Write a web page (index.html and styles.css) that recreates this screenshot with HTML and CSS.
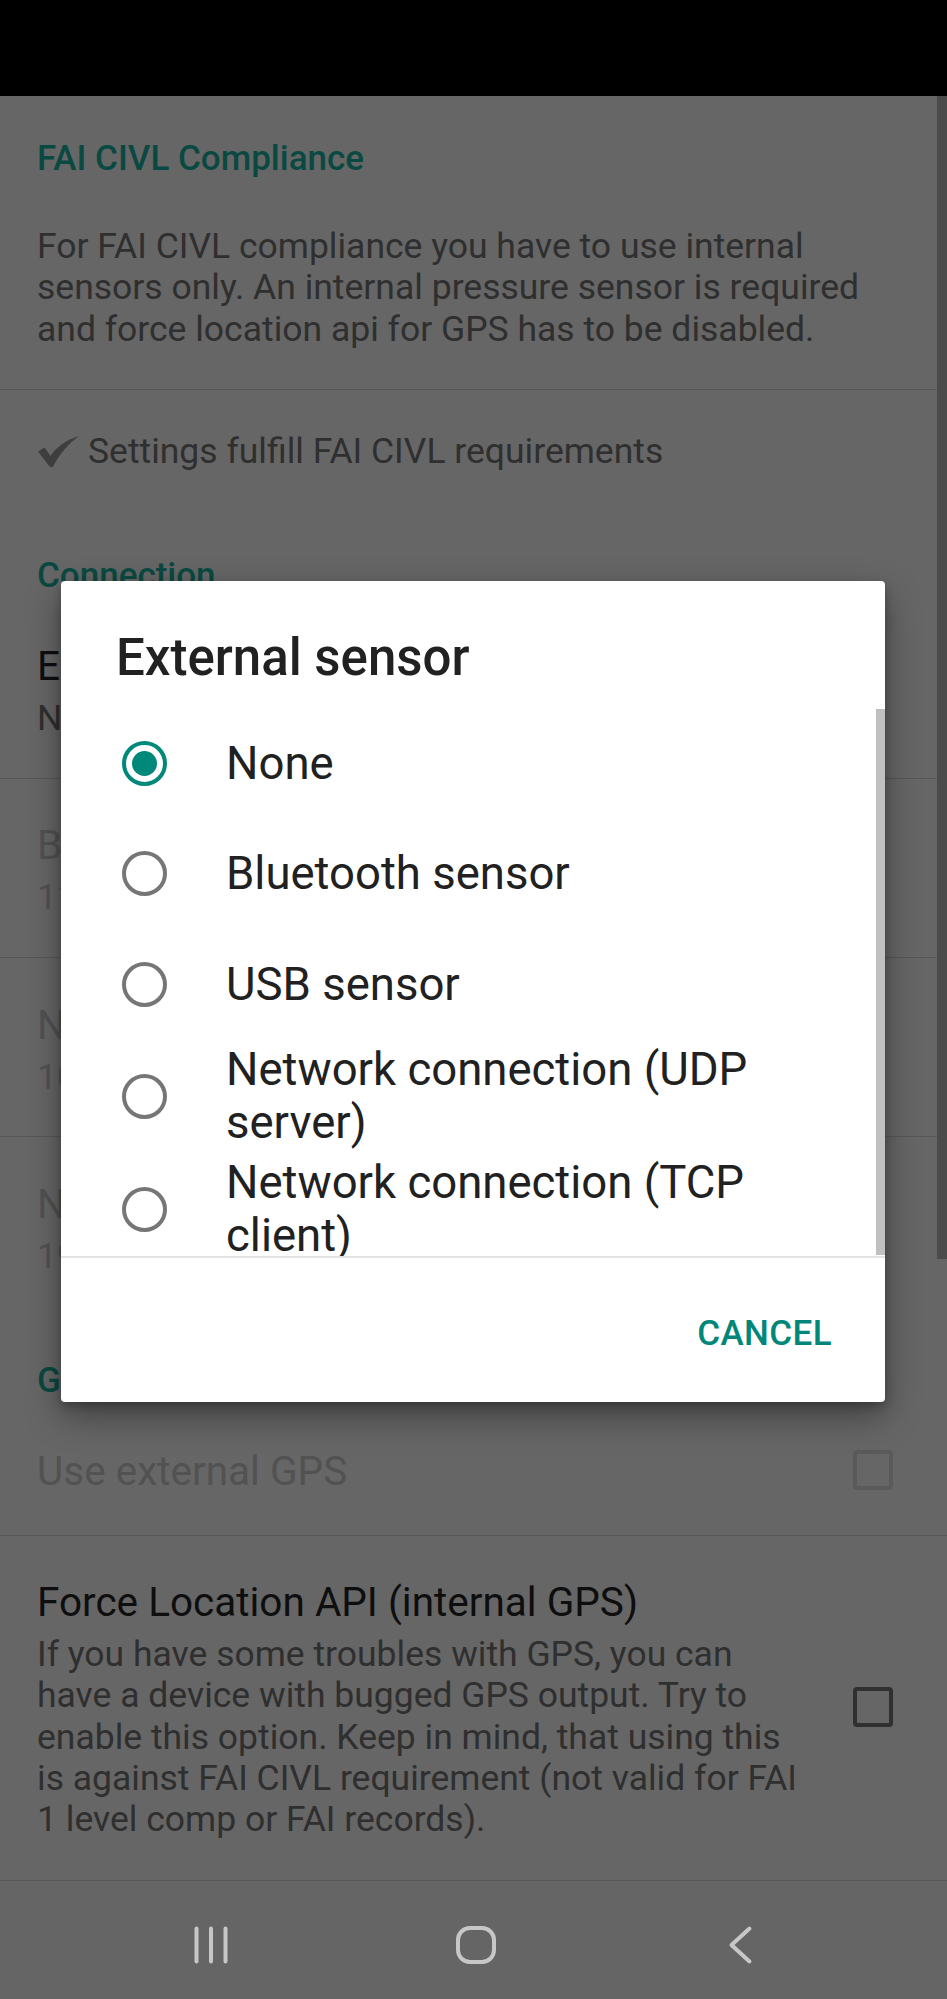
FILE: index.html
```html
<!DOCTYPE html>
<html lang="en">
<head>
<meta charset="utf-8">
<title>Settings</title>
<link rel="stylesheet" href="styles.css">
</head>
<body>
<div class="status"></div>

<main class="prefs">
  <section class="group-fai">
    <h2 class="cat">FAI CIVL Compliance</h2>
    <p class="summary summary-lead">For FAI CIVL compliance you have to use internal<br>sensors only. An internal pressure sensor is required<br>and force location api for GPS has to be disabled.</p>
  </section>

  <div class="pref-check">
    <svg class="check" width="41" height="31" viewBox="0 0 41 31"><path d="M0 15.5 L6.5 11.5 L12.5 20 C18 11.5 28 4 41 0 C31 7.5 21.5 17.5 15 31 L12 31 Z" fill="#3e3e3e"/></svg>
    <span>Settings fulfill FAI CIVL requirements</span>
  </div>

  <h2 class="cat cat-connection">Connection</h2>

  <div class="pref-two divided">
    <div class="title">External sensor</div>
    <div class="summary">None</div>
  </div>
  <div class="pref-two divided disabled">
    <div class="title">Bluetooth sensor</div>
    <div class="summary">11:22:33:44:55:66</div>
  </div>
  <div class="pref-two divided disabled">
    <div class="title">Network UDP port</div>
    <div class="summary">10110</div>
  </div>
  <div class="pref-two disabled">
    <div class="title">Network TCP address</div>
    <div class="summary">192.168.1.1:2000</div>
  </div>

  <h2 class="cat cat-gps">GPS</h2>

  <div class="pref-row row-ext divided disabled">
    <div class="row-text">
      <div class="title">Use external GPS</div>
    </div>
    <span class="checkbox"></span>
  </div>
  <div class="pref-row row-force divided">
    <div class="row-text">
      <div class="title">Force Location API (internal GPS)</div>
      <div class="summary summary-long">If you have some troubles with GPS, you can<br>have a device with bugged GPS output. Try to<br>enable this option. Keep in mind, that using this<br>is against FAI CIVL requirement (not valid for FAI<br>1 level comp or FAI records).</div>
    </div>
    <span class="checkbox"></span>
  </div>
</main>

<nav class="navbar">
  <svg class="nav-icon" width="60" height="44" viewBox="0 0 60 44"><g stroke="#c7c7c7" stroke-width="4" stroke-linecap="round"><line x1="15.5" y1="5.5" x2="15.5" y2="38.5"/><line x1="30" y1="5.5" x2="30" y2="38.5"/><line x1="44.5" y1="5.5" x2="44.5" y2="38.5"/></g></svg>
  <svg class="nav-icon" width="60" height="44" viewBox="0 0 60 44"><rect x="12" y="5" width="36" height="34" rx="12" fill="none" stroke="#c7c7c7" stroke-width="4"/></svg>
  <svg class="nav-icon" width="60" height="44" viewBox="0 0 60 44"><polyline points="38.5,5.5 20.5,22 38.5,38.5" fill="none" stroke="#c7c7c7" stroke-width="4" stroke-linecap="round" stroke-linejoin="round"/></svg>
</nav>

<div class="page-scroll"></div>

<div class="dialog" role="dialog">
  <h1 class="dialog-title">External sensor</h1>
  <div class="choice-list">
    <div class="choice"><span class="radio checked"></span><span class="choice-label">None</span></div>
    <div class="choice"><span class="radio"></span><span class="choice-label">Bluetooth sensor</span></div>
    <div class="choice"><span class="radio"></span><span class="choice-label">USB sensor</span></div>
    <div class="choice"><span class="radio"></span><span class="choice-label">Network connection (UDP<br>server)</span></div>
    <div class="choice"><span class="radio"></span><span class="choice-label">Network connection (TCP<br>client)</span></div>
    <div class="list-thumb"></div>
  </div>
  <div class="dialog-actions">
    <button class="btn-text">CANCEL</button>
  </div>
</div>
</body>
</html>
```

FILE: styles.css
```css
* { box-sizing: border-box; }

body {
  margin: 0;
  width: 947px;
  height: 1999px;
  overflow: hidden;
  position: relative;
  background: #666666;
  font-family: Roboto, "Noto Sans", "Liberation Sans", sans-serif;
}

.status {
  height: 96px;
  background: #000;
}

/* ---------- preference list (dimmed) ---------- */
.cat {
  margin: 0;
  font-size: 35px;
  font-weight: 500;
  line-height: 41px;
  color: #0a4941;
  padding: 0 37px;
}

.summary {
  font-size: 35.5px;
  line-height: 41.4px;
  color: #2f2f2f;
  margin: 8px 0 0;
  white-space: nowrap;
}

.title {
  font-size: 40.5px;
  line-height: 47px;
  color: #0e0e0e;
  white-space: nowrap;
}

.divided { border-bottom: 1px solid #575757; }

.group-fai {
  padding: 42px 37px 38.5px;
  border-bottom: 1px solid #575757;
}
.group-fai .cat { padding: 0; }
.summary-lead { margin-top: 47px; }

.pref-check {
  display: flex;
  align-items: center;
  gap: 9px;
  padding: 41.5px 37px 41.5px 38px;
  font-size: 35.5px;
  line-height: 41px;
  color: #2f2f2f;
}
.check { flex: none; }

.cat-connection { padding-top: 41.5px; padding-bottom: 3px; }
.cat-gps { padding-top: 44px; padding-bottom: 3px; }

.pref-two {
  padding: 43.5px 37px 38.5px;
}

.disabled .title,
.disabled .summary { color: #525252; }

.pref-row {
  display: flex;
  align-items: center;
  padding-left: 37px;
  padding-right: 54px;
}
.row-text { flex: 1; min-width: 0; }
.row-ext { padding-top: 44px; padding-bottom: 40.5px; }
.row-force { padding-top: 42.5px; padding-bottom: 39.5px; }
.row-force .checkbox { margin-top: -6px; }

.checkbox {
  flex: none;
  width: 40px;
  height: 40px;
  border: 4.5px solid #303030;
  border-radius: 4px;
}
.row-ext .checkbox { border-color: #5a5a5a; margin-top: -2px; }

/* ---------- nav bar ---------- */
.navbar {
  height: 119px;
  background: #656565;
  display: flex;
  justify-content: center;
  align-items: center;
  gap: 205px;
  padding: 8px 0 0 5px;
}
.nav-icon { flex: none; }

.page-scroll {
  position: absolute;
  right: 0;
  top: 96px;
  width: 10px;
  height: 1163px;
  background: #4b4b4b;
}

/* ---------- dialog ---------- */
.dialog {
  position: absolute;
  left: 61px;
  top: 581px;
  width: 824px;
  height: 821px;
  background: #ffffff;
  border-radius: 4px;
  box-shadow: 0 14px 34px rgba(0, 0, 0, 0.38), 0 4px 10px rgba(0, 0, 0, 0.22);
  display: flex;
  flex-direction: column;
  overflow: hidden;
}

.dialog-title {
  margin: 0;
  padding: 47px 54px 0 55px;
  font-size: 51px;
  font-weight: 500;
  line-height: 60px;
  color: #212121;
}

.choice-list {
  position: relative;
  margin-top: 20px;
  height: 550px;
  overflow: hidden;
  border-bottom: 2px solid #e2e2e2;
  flex: none;
}

.choice {
  display: flex;
  align-items: center;
  min-height: 110.5px;
  padding: 3.5px 0 3.5px 60.5px;
  gap: 59.5px;
}

.choice-label {
  font-size: 45.5px;
  line-height: 53px;
  color: #212121;
  white-space: nowrap;
}

.radio {
  flex: none;
  width: 45px;
  height: 45px;
  border: 4.5px solid #767676;
  border-radius: 50%;
  display: flex;
  align-items: center;
  justify-content: center;
}
.radio.checked { border-color: #00897b; }
.radio.checked::after {
  content: "";
  width: 25px;
  height: 25px;
  border-radius: 50%;
  background: #00897b;
}

.list-thumb {
  position: absolute;
  right: 0;
  top: 1px;
  width: 9px;
  height: 546px;
  background: #c0c0c0;
}

.dialog-actions {
  flex: 1;
  display: flex;
  align-items: center;
  justify-content: flex-end;
  padding-right: 53px;
  padding-top: 6px;
}

.btn-text {
  border: 0;
  background: none;
  padding: 0;
  font-family: inherit;
  font-size: 35px;
  font-weight: 500;
  letter-spacing: 0.4px;
  line-height: 41px;
  color: #00877a;
}
```
